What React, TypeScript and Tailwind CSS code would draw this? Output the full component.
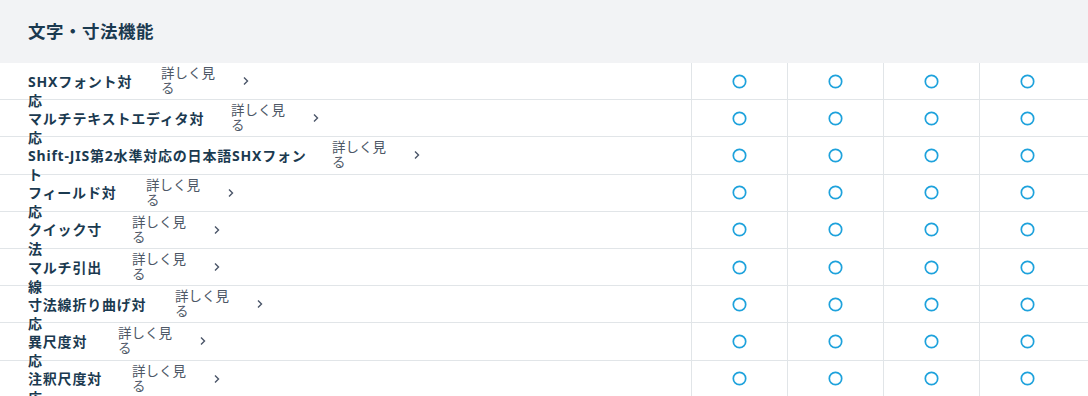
import type { ReactNode } from "react";

type Row = { first: string; second: string; nameWidth: number };

// name box widths put the link text where it sits in the reference
const rows: Row[] = [
  { first: "SHXフォント対", second: "応", nameWidth: 133 },
  { first: "マルチテキストエディタ対", second: "応", nameWidth: 203 },
  { first: "Shift-JIS第2水準対応の日本語SHXフォン", second: "ト", nameWidth: 304 },
  { first: "フィールド対", second: "応", nameWidth: 118 },
  { first: "クイック寸", second: "法", nameWidth: 104 },
  { first: "マルチ引出", second: "線", nameWidth: 104 },
  { first: "寸法線折り曲げ対", second: "応", nameWidth: 147 },
  { first: "異尺度対", second: "応", nameWidth: 90 },
  { first: "注釈尺度対", second: "応", nameWidth: 104 },
];

function Chevron() {
  return (
    <svg width="8" height="10" viewBox="0 0 8 10" className="ml-[24px] shrink-0">
      <polyline points="2,1.5 5.5,5 2,8.5" fill="none" stroke="#4a5568" strokeWidth="1.4" />
    </svg>
  );
}

function Mark() {
  return (
    <svg width="15" height="15" viewBox="0 0 15 15">
      <circle cx="7.5" cy="7.5" r="6.2" fill="none" stroke="#1ea2dc" strokeWidth="1.7" />
    </svg>
  );
}

function Cell({ children }: { children?: ReactNode }) {
  return (
    <div className="flex w-[96px] shrink-0 items-center justify-center border-l border-[#e1e5e8]">
      {children}
    </div>
  );
}

export default function App() {
  return (
    <div
      className="h-[396px] w-[1088px] overflow-hidden bg-white"
      style={{ fontFamily: '"Noto Sans", "Noto Sans CJK JP", sans-serif' }}
    >
      <div className="flex h-[63px] items-center bg-[#f2f3f5] px-[28px] pb-[1px]">
        <h2 className="text-[17.5px] font-bold tracking-[0.5px] text-[#1b3a50]">文字・寸法機能</h2>
      </div>

      <div>
        {rows.map((r) => (
          <div key={r.first} className="flex h-[37.2px] border-b border-[#e1e5e8]">
            <div className="flex w-[691px] shrink-0 items-center pl-[28px]">
              <div
                className="h-[19px] shrink-0 whitespace-nowrap text-[14px] font-bold leading-[19px] tracking-[0.8px] text-[#1b3a50]"
                style={{ width: r.nameWidth }}
              >
                {r.first}
                <br />
                {r.second}
              </div>
              <a href="#" className="flex items-center text-[#4d5766]">
                <span className="w-[57px] text-[13.5px] leading-[15px]">詳しく見る</span>
                <Chevron />
              </a>
            </div>
            <Cell>
              <Mark />
            </Cell>
            <Cell>
              <Mark />
            </Cell>
            <Cell>
              <Mark />
            </Cell>
            <Cell>
              <Mark />
            </Cell>
          </div>
        ))}
      </div>
    </div>
  );
}
